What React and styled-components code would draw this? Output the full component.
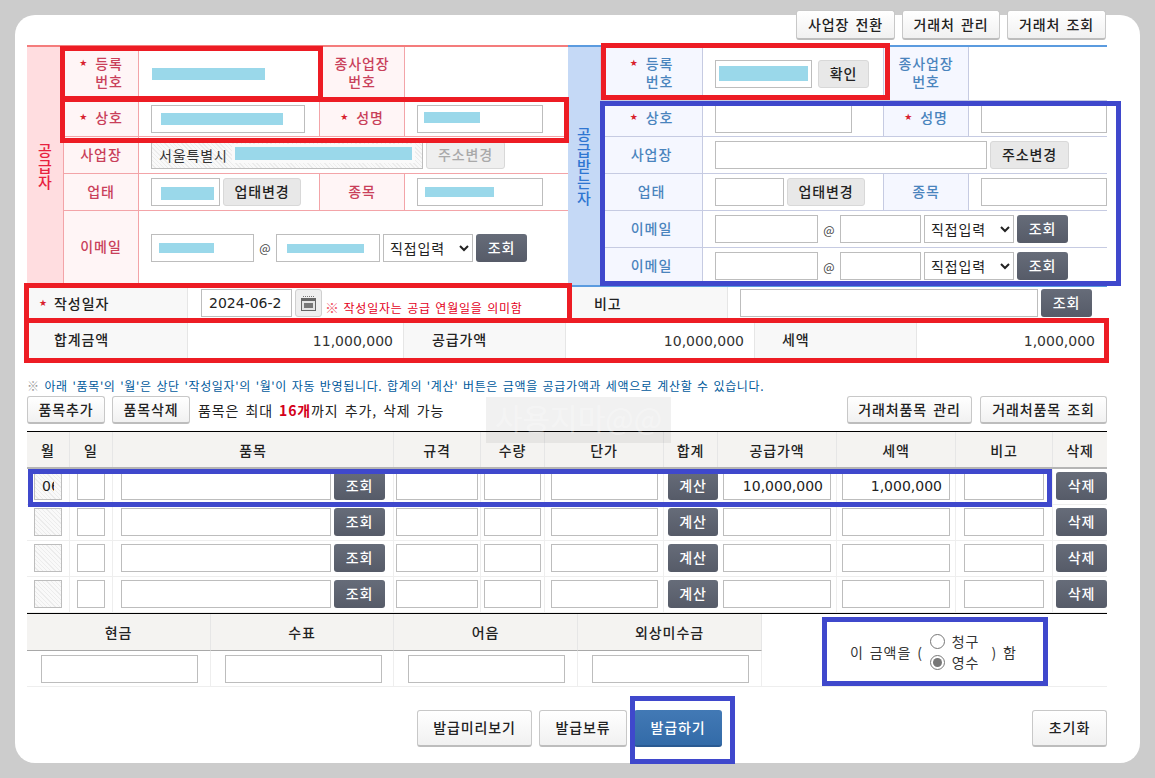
import React from 'react';
import styled, { createGlobalStyle, css } from 'styled-components';

const Global = createGlobalStyle`
  html, body { margin: 0; padding: 0; background: #cccccc; }
  * { box-sizing: border-box; }
  body, input, select, button {
    font-family: "Noto Sans CJK KR", "Noto Sans", sans-serif;
    font-size: 14px;
    letter-spacing: 0.9px;
    word-spacing: 2px;
  }
`;

const tones = {
  red: {
    side: '#ffdde0', sideText: '#e8213f', label: '#fff5f6', text: '#c9405a',
    line: '#f3a4a8', top: '#f47c7c',
  },
  blue: {
    side: '#c5d9f6', sideText: '#2f76d2', label: '#f5f7ff', text: '#4a84bd',
    line: '#c6cbe2', top: '#5b9bdf',
  },
};

const Page = styled.div`
  position: relative;
  width: 1155px;
  height: 778px;
  overflow: hidden;
`;

const Sheet = styled.div`
  display: flow-root;
  margin: 15px 0 0 15px;
  width: 1125px;
  height: 748px;
  padding: 0 33px 0 12px;
  background: #fff;
  border-radius: 20px;
`;

const TopBar = styled.div`
  display: flex;
  justify-content: flex-end;
  gap: 7px;
  height: 30px;
  margin: -5px 1px 5px 0;
  position: relative;
`;

const buttonBase = css`
  display: inline-flex;
  align-items: center;
  justify-content: center;
  flex: none;
  padding: 0 0 2px;
  white-space: nowrap;
  border-radius: 3px;
  cursor: pointer;
`;

const Btn = styled.button`
  ${buttonBase}
  width: ${p => p.$w}px;
  height: ${p => p.$h || 28}px;
  color: #222;
  font-weight: 500;
  border: 1px solid #c8c8c8;
  border-bottom: 2px solid #bdbdbd;
  background: linear-gradient(#ffffff, #f1f1f1);
`;

const GreyBtn = styled.button`
  ${buttonBase}
  width: ${p => p.$w}px;
  height: 28px;
  margin-left: ${p => p.$l || 0}px;
  color: ${p => (p.disabled ? '#a9a9a9' : '#222')};
  font-weight: 500;
  border: 1px solid #d8d8d8;
  background: ${p => (p.disabled ? '#efefef' : '#e8e8e8')};
`;

const DarkBtn = styled.button`
  ${buttonBase}
  width: ${p => p.$w || 51}px;
  height: 28px;
  color: #fff;
  font-weight: 500;
  border: 0;
  background: linear-gradient(#666c79, #565b68);
`;

const BlueBtn = styled.button`
  ${buttonBase}
  width: ${p => p.$w}px;
  height: 37px;
  color: #fff;
  font-weight: 500;
  border: 0;
  border-bottom: 2px solid #2a5a92;
  background: linear-gradient(#4279b5, #336ba8);
`;

const Parties = styled.div`
  display: grid;
  grid-template-columns: 541px 539px;
`;

const Party = styled.div`
  display: grid;
  grid-template-columns: ${p => p.$cols};
  grid-template-rows: ${p => p.$rows};
  border-top: 2px solid ${p => tones[p.$tone].top};
  border-bottom: 2px solid ${p => tones[p.$tone].top};
  height: 242px;
`;

const Side = styled.div`
  grid-row: 1 / -1;
  display: flex;
  align-items: center;
  justify-content: center;
  background: ${p => tones[p.$tone].side};
  color: ${p => tones[p.$tone].sideText};
  border-right: 1px solid ${p => tones[p.$tone].line};
  font-size: 15px;
  font-weight: 500;
  line-height: 16px;
  letter-spacing: 0;
  span { width: 15px; word-break: break-all; text-align: center; }
`;

const Label = styled.div`
  display: flex;
  align-items: center;
  justify-content: center;
  padding-bottom: 3px;
  background: ${p => tones[p.$tone].label};
  color: ${p => tones[p.$tone].text};
  border-right: 1px solid ${p => tones[p.$tone].line};
  border-bottom: 1px solid ${p => tones[p.$tone].line};
  font-weight: 500;
  line-height: 18px;
  text-align: center;
`;

const Required = styled.span`
  display: inline-flex;
  align-items: flex-start;
  gap: 8px;
  text-align: left;
`;

const Star = styled.span`
  color: #d8202c;
  font-size: 9px;
  letter-spacing: 0;
  line-height: 18px;
  font-family: "DejaVu Sans", sans-serif;
`;

const Cell = styled.div`
  grid-column: span ${p => p.$span || 1};
  display: flex;
  align-items: center;
  gap: 3px;
  padding-left: 12px;
  min-width: 0;
  border-right: ${p => (p.$end ? '0' : `1px solid ${tones[p.$tone].line}`)};
  border-bottom: 1px solid ${p => tones[p.$tone].line};
`;

const Input = styled.input`
  flex: none;
  width: ${p => p.$w}px;
  height: 28px;
  padding: 0 7px;
  border: 1px solid #bdbdbd;
  border-radius: 0;
  background: #fff;
  outline: none;
  color: #222;
  text-align: ${p => p.$align || 'left'};
  ${p => p.$mono && 'font-family: "DejaVu Sans", sans-serif; letter-spacing: 0;'}
`;

const hatch = css`
  background: repeating-linear-gradient(45deg, #f9f9f9 0 2px, #ececec 2px 3px);
`;

const HatchInput = styled(Input)`
  ${hatch}
  padding: 0 7px;
`;

const Field = styled.div`
  flex: none;
  display: flex;
  align-items: center;
  width: ${p => p.$w}px;
  height: 28px;
  padding-left: ${p => p.$pad}px;
  border: 1px solid #bdbdbd;
  background: #fff;
`;

const LockedField = styled(Field)`
  ${hatch}
  color: #333;
  white-space: nowrap;
`;

const Redact = styled.i`
  display: block;
  flex: none;
  width: ${p => p.$w}px;
  height: ${p => p.$h}px;
  margin-top: ${p => p.$t || 0}px;
  margin-left: ${p => p.$l || 0}px;
  background: #9ad8ea;
  ${p => p.$halo && 'outline: 3px solid #fafafa;'}
`;

const At = styled.span`
  flex: none;
  width: 16px;
  text-align: center;
  color: #444;
  font-size: 12px;
  letter-spacing: 0;
`;

const Select = styled.select`
  flex: none;
  width: 90px;
  height: 28px;
  padding: 0 2px;
  border: 1px solid #bdbdbd;
  border-radius: 0;
  background: #fff;
  color: #222;
`;

const MetaRow = styled.div`
  display: grid;
  grid-template-columns: ${p => p.$cols};
  height: ${p => p.$h}px;
  margin-top: ${p => p.$top || 0}px;
  ${p => p.$line && 'border-bottom: 1px solid #c8c8c8;'}
`;

const MetaLabel = styled.div`
  display: flex;
  align-items: center;
  gap: 7px;
  padding-left: ${p => p.$pad || 27}px;
  padding-bottom: ${p => (p.$lift ? 3 : 0)}px;
  background: #f8f8f8;
  border-right: 1px solid #e6e6e6;
  color: #222;
  font-weight: 500;
`;

const MetaCell = styled.div`
  display: flex;
  align-items: center;
  gap: 3px;
  padding-left: ${p => p.$pad || 12}px;
  min-width: 0;
`;

const Amount = styled.div`
  display: flex;
  align-items: center;
  justify-content: flex-end;
  padding-right: 10px;
  border-right: 1px solid #e6e6e6;
  font-family: "DejaVu Sans", sans-serif;
  letter-spacing: 0;
  word-spacing: 0;
  color: #333;
  &:last-child { border-right: 0; padding-right: 12px; }
`;

const CalendarBtn = styled.button`
  ${buttonBase}
  padding: 0;
  width: 27px;
  height: 28px;
  border: 1px solid #cfcfcf;
  background: #efefef;
`;

const DateNote = styled.span`
  color: #e3001b;
  font-size: 12px;
  white-space: nowrap;
  letter-spacing: 0.8px;
  word-spacing: 1px;
  padding-top: 8px;
  b { font-size: 14px; font-weight: 400; color: #ef5a6a; letter-spacing: 0; }
`;

const Note = styled.p`
  margin: 20px 0 3px;
  height: 14px;
  line-height: 14px;
  font-size: 12px;
  letter-spacing: 0.65px;
  word-spacing: 1.4px;
  color: #005a9c;
  white-space: nowrap;
  span { color: #9a9a9a; }
`;

const Toolbar = styled.div`
  display: flex;
  align-items: center;
  gap: 7px;
  height: 28px;
  margin-bottom: 7px;
`;

const Hint = styled.span`
  margin-left: 1px;
  color: #222;
  white-space: nowrap;
  b { color: #d4001a; font-weight: 700; }
`;

const Push = styled.div`
  margin-left: auto;
  display: flex;
  gap: 8px;
`;

const itemCols = '43px 43px 281px 87px 64px 119px 54px 119px 119px 97px 54px';

const ItemHead = styled.div`
  display: grid;
  grid-template-columns: ${itemCols};
  height: 38px;
  border-top: 1px solid #000;
  border-bottom: 2px solid #b5b5b5;
`;

const HeadCell = styled.div`
  display: flex;
  align-items: center;
  justify-content: center;
  background: #f4f3f1;
  border-right: 1px solid #e6e6e6;
  color: #222;
  font-weight: 500;
  &:last-child { border-right: 0; }
`;

const ItemRow = styled.div`
  display: grid;
  grid-template-columns: ${itemCols};
  height: 36px;
  border-bottom: 1px solid #eeeeee;
  &:last-of-type { height: 35px; border-bottom: 0; }
`;

const ItemCell = styled.div`
  display: flex;
  align-items: flex-start;
  justify-content: ${p => p.$justify || 'center'};
  gap: 3px;
  padding-top: 3px;
  padding-left: ${p => p.$pad || 0}px;
  border-right: ${p => (p.$flush ? '0' : '1px solid #eeeeee')};
  &:last-child { border-right: 0; }
`;

const PayArea = styled.div`
  display: flex;
  border-top: 1px solid #000;
  height: 74px;
`;

const PayGrid = styled.div`
  display: grid;
  grid-template-columns: 184px 183px 184px 184px;
  grid-template-rows: 37px 36px;
  border-bottom: 1px solid #eeeeee;
`;

const PayHead = styled(HeadCell)`
  border-bottom: 1px solid #a8a8a8;
  &:last-child { border-right: 1px solid #e6e6e6; }
`;

const PayCell = styled.div`
  display: flex;
  align-items: center;
  padding-left: 14px;
  border-right: 1px solid #eeeeee;
`;

const Claim = styled.div`
  flex: 1;
  display: flex;
  align-items: center;
  padding: 3px 0 0 88px;
  border-bottom: 1px solid #eeeeee;
  color: #333;
  white-space: nowrap;
`;

const RadioStack = styled.div`
  display: flex;
  flex-direction: column;
  gap: 2px;
  margin: 0 12px 0 7px;
`;

const RadioLabel = styled.label`
  display: flex;
  align-items: center;
  gap: 7px;
  height: 19px;
  input { margin: 0; width: 15px; height: 15px; accent-color: #777; }
`;

const Footer = styled.div`
  display: flex;
  gap: 7px;
  padding-left: 390px;
  margin-top: 23px;
`;

const FooterEnd = styled.div`
  margin-left: auto;
`;

const Watermark = styled.div`
  position: absolute;
  left: 486px;
  top: 397px;
  width: 185px;
  height: 46px;
  padding-top: 2px;
  text-align: center;
  background: rgba(0, 0, 0, 0.055);
  color: rgba(255, 255, 255, 0.3);
  font-size: 30px;
  line-height: 36px;
  letter-spacing: 0;
  word-spacing: 0;
  white-space: nowrap;
  pointer-events: none;
`;

const Mark = styled.div`
  position: absolute;
  left: ${p => p.$x}px;
  top: ${p => p.$y}px;
  width: ${p => p.$w}px;
  height: ${p => p.$h}px;
  border: 5px solid ${p => (p.$blue ? '#3f48cc' : '#ed1c24')};
  pointer-events: none;
`;

const marks = [
  { x: 60, y: 46, w: 263, h: 55 },
  { x: 60, y: 97, w: 509, h: 46 },
  { x: 601, y: 43, w: 289, h: 57 },
  { x: 24, y: 283, w: 548, h: 40 },
  { x: 24, y: 318, w: 1085, h: 45 },
  { x: 600, y: 101, w: 521, h: 185, blue: true },
  { x: 28, y: 469, w: 1024, h: 38, blue: true },
  { x: 822, y: 617, w: 226, h: 69, blue: true },
  { x: 630, y: 696, w: 105, h: 68, blue: true },
];

const CalendarIcon = () => (
  <svg width="17" height="17" viewBox="0 0 17 17">
    <rect x="1.5" y="3.5" width="14" height="12" fill="#e4e4e4" stroke="#666" />
    <rect x="1" y="3" width="15" height="3" fill="#666" />
    <path d="M3 1.5h11" stroke="#777" strokeDasharray="1 1" />
    <rect x="4" y="8" width="9" height="5" fill="#777" />
  </svg>
);

const EmailCells = ({ first, second, inputW, domainW }) => (
  <>
    {first || <Input $w={inputW} />}
    <At>@</At>
    {second || <Input $w={domainW} />}
    <Select defaultValue="직접입력"><option>직접입력</option></Select>
    <DarkBtn>조회</DarkBtn>
  </>
);

const ItemLine = ({ month, supply, tax }) => (
  <ItemRow>
    <ItemCell $justify="flex-start" $pad={7}><HatchInput $w={28} $mono value={month || ''} readOnly /></ItemCell>
    <ItemCell $justify="flex-start" $pad={7}><Input $w={28} /></ItemCell>
    <ItemCell $justify="flex-start" $pad={8}><Input $w={210} /><DarkBtn>조회</DarkBtn></ItemCell>
    <ItemCell><Input $w={82} /></ItemCell>
    <ItemCell><Input $w={57} /></ItemCell>
    <ItemCell><Input $w={107} /></ItemCell>
    <ItemCell $justify="flex-end" $flush><DarkBtn $w={50}>계산</DarkBtn></ItemCell>
    <ItemCell><Input $w={108} $mono $align="right" value={supply || ''} readOnly /></ItemCell>
    <ItemCell><Input $w={108} $mono $align="right" value={tax || ''} readOnly /></ItemCell>
    <ItemCell><Input $w={80} /></ItemCell>
    <ItemCell $justify="flex-end"><DarkBtn>삭제</DarkBtn></ItemCell>
  </ItemRow>
);

const headers = ['월', '일', '품목', '규격', '수량', '단가', '합계', '공급가액', '세액', '비고', '삭제'];
const payments = ['현금', '수표', '어음', '외상미수금'];

export default function App() {
  return (
    <Page>
      <Global />
      <Sheet>
        <TopBar>
          <Btn $w={99} $h={30}>사업장 전환</Btn>
          <Btn $w={98} $h={30}>거래처 관리</Btn>
          <Btn $w={99} $h={30}>거래처 조회</Btn>
        </TopBar>

        <Parties>
          <Party $tone="red" $cols="37px 75px 181px 85px 163px" $rows="54px 36px 37px 37px 74px">
            <Side $tone="red"><span>공급자</span></Side>
            <Label $tone="red"><Required><Star>★</Star><span>등록<br />번호</span></Required></Label>
            <Cell $tone="red"><Redact $w={113} $h={12} $l={1} /></Cell>
            <Label $tone="red"><span>종사업장<br />번호</span></Label>
            <Cell $tone="red" $end />

            <Label $tone="red"><Required><Star>★</Star><span>상호</span></Required></Label>
            <Cell $tone="red"><Field $w={154} $pad={9}><Redact $w={122} $h={12} /></Field></Cell>
            <Label $tone="red"><Required><Star>★</Star><span>성명</span></Required></Label>
            <Cell $tone="red" $end><Field $w={126} $pad={6}><Redact $w={56} $h={11} $t={-3} /></Field></Cell>

            <Label $tone="red">사업장</Label>
            <Cell $tone="red" $span={3} $end>
              <LockedField $w={272} $pad={7}>서울특별시<Redact $w={177} $h={13} $l={7} $t={-4} $halo /></LockedField>
              <GreyBtn $w={79} disabled>주소변경</GreyBtn>
            </Cell>

            <Label $tone="red">업태</Label>
            <Cell $tone="red"><Field $w={69} $pad={9}><Redact $w={53} $h={13} $t={3} /></Field><GreyBtn $w={78}>업태변경</GreyBtn></Cell>
            <Label $tone="red">종목</Label>
            <Cell $tone="red" $end><Field $w={126} $pad={7}><Redact $w={69} $h={10} /></Field></Cell>

            <Label $tone="red">이메일</Label>
            <Cell $tone="red" $span={3} $end>
              <EmailCells
                first={<Field $w={103} $pad={7}><Redact $w={55} $h={10} $t={1} /></Field>}
                second={<Field $w={104} $pad={10}><Redact $w={77} $h={9} $t={2} /></Field>}
              />
            </Cell>
          </Party>

          <Party $tone="blue" $cols="33px 102px 181px 85px 138px" $rows="54px 36px 37px 37px 37px 37px">
            <Side $tone="blue"><span>공급받는자</span></Side>
            <Label $tone="blue"><Required><Star>★</Star><span>등록<br />번호</span></Required></Label>
            <Cell $tone="blue">
              <Field $w={97} $pad={3}><Redact $w={89} $h={15} /></Field>
              <GreyBtn $w={51} $l={3}>확인</GreyBtn>
            </Cell>
            <Label $tone="blue"><span>종사업장<br />번호</span></Label>
            <Cell $tone="blue" $end />

            <Label $tone="blue"><Required><Star>★</Star><span>상호</span></Required></Label>
            <Cell $tone="blue"><Input $w={137} /></Cell>
            <Label $tone="blue"><Required><Star>★</Star><span>성명</span></Required></Label>
            <Cell $tone="blue" $end><Input $w={126} /></Cell>

            <Label $tone="blue">사업장</Label>
            <Cell $tone="blue" $span={3} $end><Input $w={272} /><GreyBtn $w={79}>주소변경</GreyBtn></Cell>

            <Label $tone="blue">업태</Label>
            <Cell $tone="blue"><Input $w={69} /><GreyBtn $w={78}>업태변경</GreyBtn></Cell>
            <Label $tone="blue">종목</Label>
            <Cell $tone="blue" $end><Input $w={126} /></Cell>

            <Label $tone="blue">이메일</Label>
            <Cell $tone="blue" $span={3} $end><EmailCells inputW={103} domainW={81} /></Cell>

            <Label $tone="blue">이메일</Label>
            <Cell $tone="blue" $span={3} $end><EmailCells inputW={103} domainW={81} /></Cell>
          </Party>
        </Parties>

        <MetaRow $cols="161px 380px 160px 379px" $h={32}>
          <MetaLabel $pad={12}><Star>★</Star>작성일자</MetaLabel>
          <MetaCell $pad={13}>
            <Input $w={91} $mono value="2024-06-2" readOnly />
            <CalendarBtn><CalendarIcon /></CalendarBtn>
            <DateNote><b>※</b> 작성일자는 공급 연월일을 의미함</DateNote>
          </MetaCell>
          <MetaLabel $pad={26}>비고</MetaLabel>
          <MetaCell><Input $w={298} /><DarkBtn>조회</DarkBtn></MetaCell>
        </MetaRow>
        <MetaRow $cols="161px 216px 162px 189px 162px 190px" $h={36} $top={4} $line>
          <MetaLabel $lift>합계금액</MetaLabel>
          <Amount>11,000,000</Amount>
          <MetaLabel $lift $pad={28}>공급가액</MetaLabel>
          <Amount>10,000,000</Amount>
          <MetaLabel $lift>세액</MetaLabel>
          <Amount>1,000,000</Amount>
        </MetaRow>

        <Note><span>※</span> 아래 '품목'의 '월'은 상단 '작성일자'의 '월'이 자동 반영됩니다. 합계의 '계산' 버튼은 금액을 공급가액과 세액으로 계산할 수 있습니다.</Note>

        <Toolbar>
          <Btn $w={78}>품목추가</Btn>
          <Btn $w={78}>품목삭제</Btn>
          <Hint>품목은 최대 <b>16개</b>까지 추가, 삭제 가능</Hint>
          <Push>
            <Btn $w={125}>거래처품목 관리</Btn>
            <Btn $w={127}>거래처품목 조회</Btn>
          </Push>
        </Toolbar>

        <ItemHead>
          {headers.map((h, i) => <HeadCell key={i}>{h}</HeadCell>)}
        </ItemHead>
        <ItemLine month="06" supply="10,000,000" tax="1,000,000" />
        <ItemLine />
        <ItemLine />
        <ItemLine />

        <PayArea>
          <PayGrid>
            {payments.map(p => <PayHead key={p}>{p}</PayHead>)}
            {payments.map(p => <PayCell key={p}><Input $w={157} /></PayCell>)}
          </PayGrid>
          <Claim>
            이 금액을 (
            <RadioStack>
              <RadioLabel><input type="radio" name="claim" />청구</RadioLabel>
              <RadioLabel><input type="radio" name="claim" defaultChecked />영수</RadioLabel>
            </RadioStack>
            ) 함
          </Claim>
        </PayArea>

        <Footer>
          <Btn $w={115} $h={37}>발급미리보기</Btn>
          <Btn $w={88} $h={37}>발급보류</Btn>
          <BlueBtn $w={88}>발급하기</BlueBtn>
          <FooterEnd><Btn $w={75} $h={37}>초기화</Btn></FooterEnd>
        </Footer>
      </Sheet>

      <Watermark>사용지마@@</Watermark>
      {marks.map((m, i) => (
        <Mark key={i} $x={m.x} $y={m.y} $w={m.w} $h={m.h} $blue={m.blue} />
      ))}
    </Page>
  );
}
